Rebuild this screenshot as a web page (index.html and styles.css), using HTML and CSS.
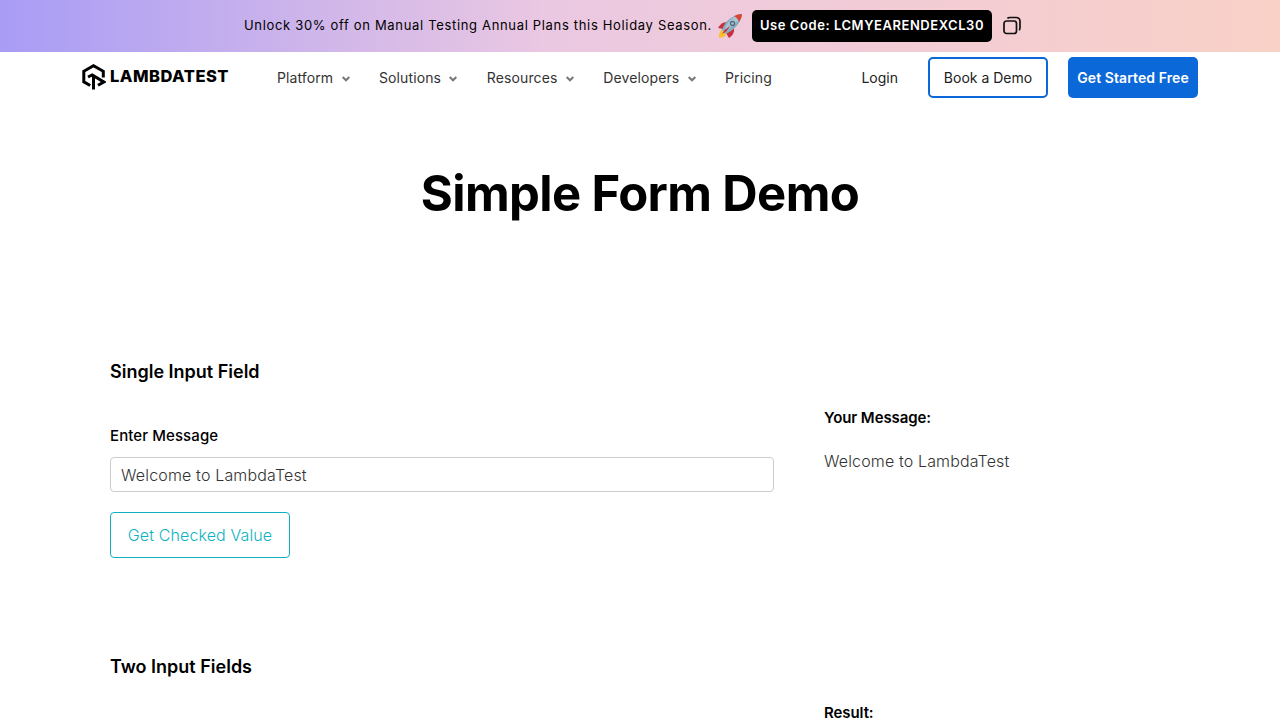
FILE: index.html
```
<!DOCTYPE html>
<html lang="en">
<head>
<meta charset="utf-8">
<title>Simple Form Demo</title>
<link rel="stylesheet" href="styles.css">
</head>
<body>
<div class="banner">
  <span class="offer">Unlock 30% off on Manual Testing Annual Plans this Holiday Season.</span>
  <svg class="rocket" viewBox="0 0 26 26"><path d="M1 15Q4 9 10 9L13 12 6 16Z" fill="#c8303f"/><path d="M12 25Q18 21 17 15L14 13 9 20Z" fill="#c8303f"/><path d="M5 16 2 21 2 25 7 24 10 20Z" fill="#fbc02d"/><path d="M5 17C8 8 15 2 25 1 24 10 17 17 9 21Z" fill="#82aebf"/><path d="M8 15C11 8 16 4 20 3L23 6 10 18Z" fill="#a8c5d1"/><path d="M17 3Q21 1 25 1 25 5 22 9 21 5 17 3Z" fill="#dc4432"/><circle cx="15.500" cy="10.500" r="2.700" fill="#546e7a"/><circle cx="15.500" cy="10.500" r="1.300" fill="#a8c5d1"/><path d="M5 21Q8 16 13 13 11 18 5 21Z" fill="#c8303f"/></svg>
  <span class="code">Use Code: LCMYEARENDEXCL30</span>
  <svg class="copy" viewBox="0 0 20 20"><path d="M5.500 2.500Q6 1.500 8 1.500h6q4 0 4 4v6q0 2-1 2.500"/><rect x="2" y="5" width="12.500" height="12.500" rx="2.500"/></svg>
</div>
<header class="header">
  <div class="logo">
    <svg class="mark" viewBox="0 0 24 26"><path d="M8.200 21.500 1.800 17.800V7.300L11.500 1.800 21.300 7.300V13.500"/><path d="M6 13 10.200 11 21.800 18 16 21.300M11.500 25.500V12"/></svg>
    <span class="wordmark">LAMBDATEST</span>
  </div>
  <nav class="nav">
    <a class="drop">Platform<svg viewBox="0 0 8 6"><path d="M.7 1 4 4.300 7.300 1"/></svg></a>
    <a class="drop">Solutions<svg viewBox="0 0 8 6"><path d="M.7 1 4 4.300 7.300 1"/></svg></a>
    <a class="drop">Resources<svg viewBox="0 0 8 6"><path d="M.7 1 4 4.300 7.300 1"/></svg></a>
    <a class="drop">Developers<svg viewBox="0 0 8 6"><path d="M.7 1 4 4.300 7.300 1"/></svg></a>
    <a>Pricing</a>
  </nav>
  <div class="actions"><a class="login">Login</a><a class="demo">Book a Demo</a><a class="start">Get Started Free</a></div>
</header>
<main>
  <h1>Simple Form Demo</h1>
  <section class="block">
    <h2>Single Input Field</h2>
    <div class="columns">
      <form class="form">
        <label for="message">Enter Message</label>
        <input id="message" value="Welcome to LambdaTest">
        <button type="button">Get Checked Value</button>
      </form>
      <div class="output"><h3>Your Message:</h3><p>Welcome to LambdaTest</p></div>
    </div>
  </section>
  <section class="block last">
    <h2>Two Input Fields</h2>
    <div class="columns"><div class="form"></div><div class="output"><h3>Result:</h3></div></div>
  </section>
</main>
</body>
</html>
```
FILE: styles.css
```
* { box-sizing: border-box; }
body { margin: 0; height: 720px; overflow: hidden; font-family: Inter, sans-serif; color: #000; background: #fff; }
.banner { height: 52px; padding-left: 244px; display: flex; align-items: center; background: linear-gradient(90deg, #a89cf5 0%, #ebc8e2 43%, #f9d1c7 100%); }
.offer { width: 468px; padding-bottom: 2px; font-size: 13px; letter-spacing: .67px; white-space: nowrap; }
.rocket { width: 26px; height: 26px; margin-left: 5px; }
.code { width: 240px; height: 32px; margin-left: 9px; padding-bottom: 2px; border-radius: 5px; background: #000; color: #fff; font-size: 13px; font-weight: 600; letter-spacing: .56px; display: flex; align-items: center; justify-content: center; white-space: nowrap; }
.copy { width: 20px; height: 20px; margin-left: 10px; fill: none; stroke: #111; stroke-width: 1.7; }
.header { height: 51px; padding: 0 82px; display: flex; align-items: center; }
.logo { display: flex; align-items: center; width: 195px; height: 28px; gap: 4px; margin-bottom: 2px; font-weight: 800; font-size: 16.500px; }
.wordmark { letter-spacing: .47px; padding-bottom: 1px; }
.mark { width: 24px; height: 26px; fill: none; stroke: #000; stroke-width: 3; }
.nav { display: flex; gap: 29.4px; font-size: 14px; letter-spacing: .11px; color: #333; }
.drop { display: flex; align-items: center; gap: 8.400px; }
.drop svg { width: 8px; height: 6px; margin-top: 3px; fill: none; stroke: #777; stroke-width: 2; }
.actions { margin-left: auto; display: flex; align-items: center; font-size: 14px; color: #222; }
.login { margin-right: 30px; }
.demo, .start { height: 41px; border-radius: 5px; display: flex; align-items: center; justify-content: center; }
.demo { width: 120px; border: 2px solid #0b68d8; margin-right: 20px; }
.start { width: 130px; background: #0b68d8; color: #fff; font-weight: 600; letter-spacing: .08px; }
h1 { margin: 61px 0 0; height: 60px; line-height: 60px; text-align: center; font-size: 49px; font-weight: 700; letter-spacing: -.63px; }
.block { margin: 135px 110px 0; height: 160px; }
h2 { margin: 0; font-size: 18px; line-height: 26px; font-weight: 600; }
.columns { display: flex; gap: 50px; padding-top: 20px; }
.form { width: 664px; padding-top: 20px; }
label { display: block; font-size: 15px; line-height: 22px; font-weight: 500; letter-spacing: .1px; }
input { display: block; width: 664px; height: 35px; margin-top: 10px; padding: 1px 10px 0; border: 1px solid #ccc; border-radius: 4px; font: 300 16px Inter, sans-serif; letter-spacing: .16px; color: #333; }
button { display: block; width: 180px; height: 46px; margin-top: 20px; padding: 0; border: 1px solid #0eb2bf; border-radius: 4px; background: #fff; color: #0eb2bf; font: 300 16px Inter, sans-serif; letter-spacing: .12px; }
.output { padding-top: 2px; }
.output h3 { margin: 0; font-size: 15px; line-height: 22px; font-weight: 600; letter-spacing: -.08px; }
.output p { margin: 20px 0 0; font-size: 16px; line-height: 24px; font-weight: 300; letter-spacing: .14px; color: #333; }
.last { height: auto; }
.last .form { padding-top: 0; }
.last .output { padding-top: 6px; }
.last .output h3 { line-height: 14px; }
```
